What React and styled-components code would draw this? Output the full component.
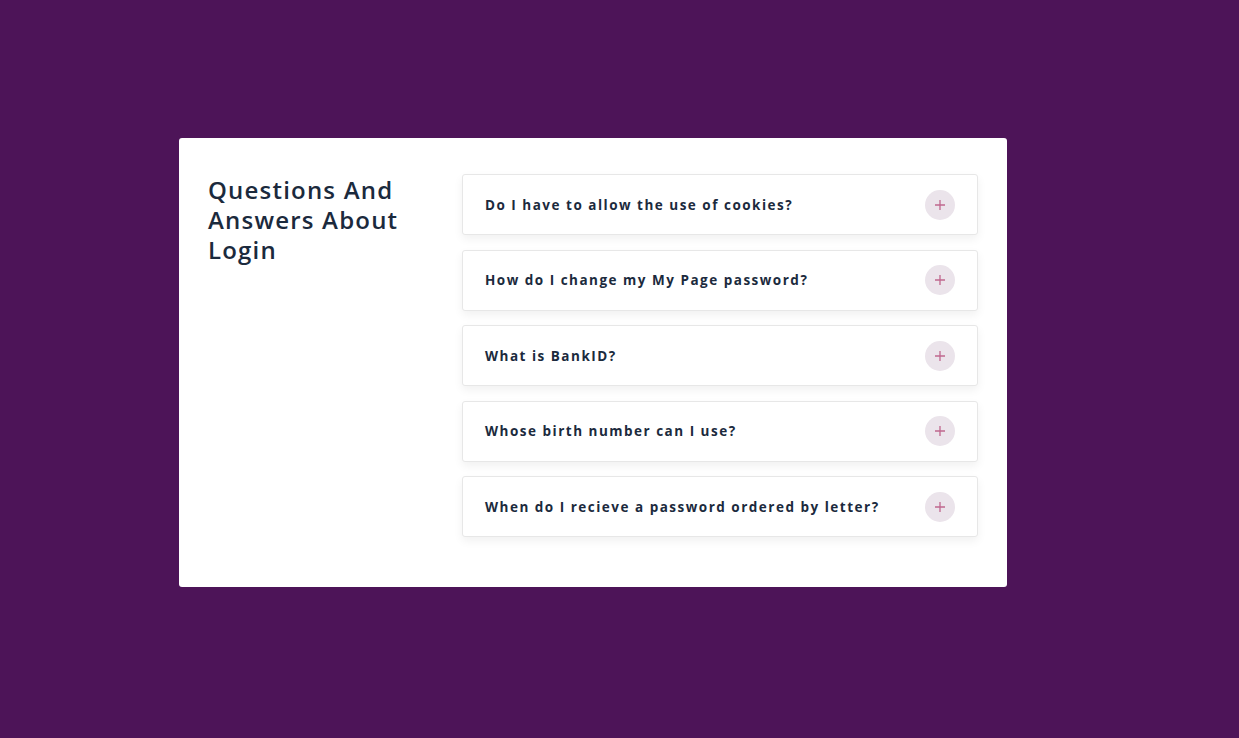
import React, { useState } from 'react'
import styled, { createGlobalStyle } from 'styled-components'

const GlobalStyle = createGlobalStyle`
  html, body {
    margin: 0;
    padding: 0;
    background: #4d1458;
  }
  body {
    font-family: 'Open Sans', 'Noto Sans', sans-serif;
  }
`

const Page = styled.main`
  min-height: 738px;
  box-sizing: border-box;
  padding: 138px 0 0 179px;
`

const Card = styled.section`
  width: 828px;
  box-sizing: border-box;
  background: #fff;
  border-radius: 3px;
  padding: 36px 29px 50px 29px;
  display: grid;
  grid-template-columns: 220px 1fr;
  column-gap: 34px;
`

const Title = styled.h2`
  margin: 0;
  padding-top: 1px;
  font-size: 24px;
  line-height: 30px;
  font-weight: 600;
  letter-spacing: 1.2px;
  color: #1b2a3d;
`

const List = styled.div`
  display: flex;
  flex-direction: column;
  gap: 14.5px;
`

const Item = styled.div`
  height: 61px;
  box-sizing: border-box;
  border: 1px solid #e7e7e7;
  border-radius: 3px;
  background: #fff;
  box-shadow: 0 4px 10px rgba(0, 0, 0, 0.06);
  display: flex;
  align-items: center;
  justify-content: space-between;
  padding: 0 22px;
  cursor: pointer;
`

const Question = styled.span`
  font-size: 13.5px;
  font-weight: 700;
  letter-spacing: 1.5px;
  color: #1b2a3d;
`

const Toggle = styled.span`
  width: 30px;
  height: 30px;
  border-radius: 50%;
  background: #ebe4eb;
  display: flex;
  align-items: center;
  justify-content: center;
  flex: none;
`

const questions = [
  'Do I have to allow the use of cookies?',
  'How do I change my My Page password?',
  'What is BankID?',
  'Whose birth number can I use?',
  'When do I recieve a password ordered by letter?',
]

const Plus = () => (
  <svg width="12" height="12" viewBox="0 0 12 12">
    <path d="M6 1v10M1 6h10" stroke="#c0678f" strokeWidth="1.3" fill="none" />
  </svg>
)

export default function App() {
  const [open, setOpen] = useState(null)
  return (
    <Page>
      <GlobalStyle />
      <Card>
        <Title>Questions And Answers About Login</Title>
        <List>
          {questions.map((q, i) => (
            <Item key={q} onClick={() => setOpen(open === i ? null : i)}>
              <Question>{q}</Question>
              <Toggle>
                <Plus />
              </Toggle>
            </Item>
          ))}
        </List>
      </Card>
    </Page>
  )
}
